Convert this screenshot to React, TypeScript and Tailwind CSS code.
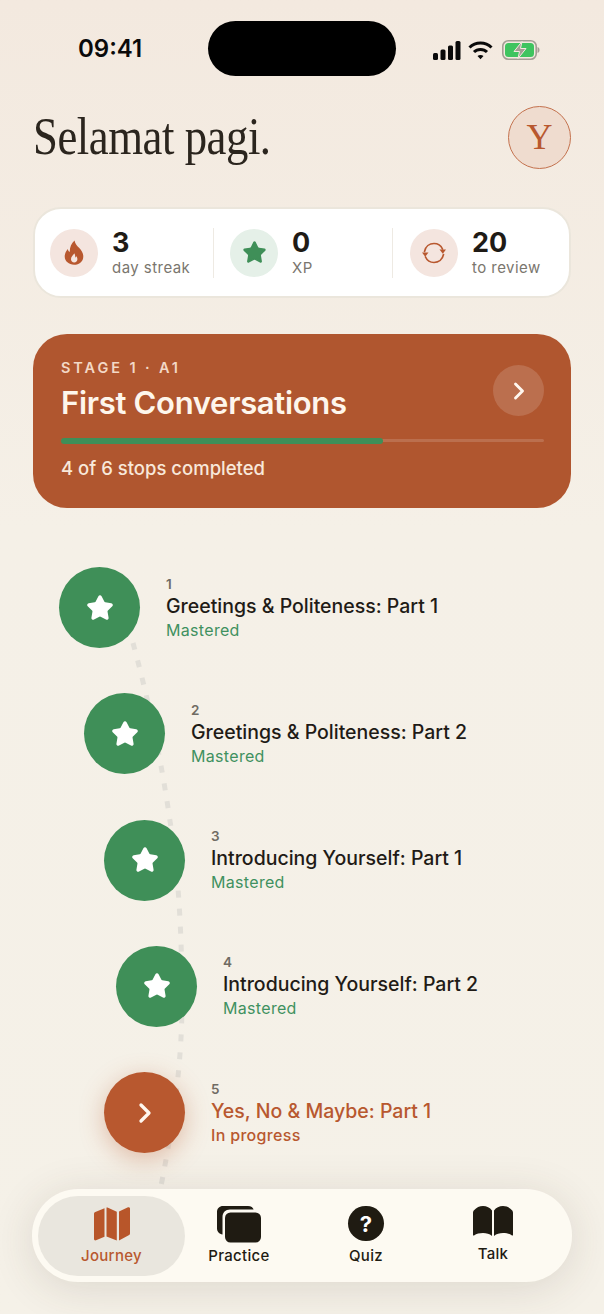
import React from 'react';
import { ChevronRight, Star } from 'lucide-react';

const FlameIcon = () => (
  <svg width="20" height="25" viewBox="0 0 20 25" fill="none">
    <path
      fillRule="evenodd"
      d="M10.5 0.5c0.6 3.6 2.6 5.2 4.8 7.6 2.2 2.4 4 5.100 4 8.300 0 4.900-4 8.400-9.200 8.400S0.700 21.300 0.700 16.600c0-3.300 1.500-5.800 3.100-7.700 0.300 1.500 0.900 2.500 2 3.200C5.500 7.700 7.300 3.300 10.500 0.500z M10.200 13.200c-0.500 1.700-3.200 3.200-3.200 6 0 1.900 1.400 3.300 3.200 3.300s3.200-1.400 3.200-3.300c0-1.200-0.500-2.100-1.200-2.900-0.200 0.700-0.500 1.100-1.100 1.400 0.300-1.500 0-3.200-0.900-4.500z"
      fill="#b8582f"
    />
  </svg>
);

const ReviewIcon = () => (
  <svg width="26" height="24" viewBox="0 0 26 24" fill="none" stroke="#b8582f" strokeWidth="1.7" strokeLinecap="round">
    <path d="M3.500 10.500C4.500 5.500 8.500 2.500 13 2.500c3.700 0 6.900 2 8.500 5.500" />
    <path d="M22.500 13.500c-1 5-5 8-9.500 8-3.700 0-6.900-2-8.500-5.500" />
    <path d="M18.500 8.500h6.500l-3.200 4.200z" fill="#b8582f" stroke="none" />
    <path d="M1 11.500h6.500l-3.300 4.200z" fill="#b8582f" stroke="none" transform="rotate(0)" />
  </svg>
);

const MapIcon = () => (
  <svg width="36" height="34" viewBox="0 0 36 34" fill="#b8562a">
    <path d="M10.500 1.200v28.600L2 33.300c-1 0.400-2-0.200-2-1.300V7c0-0.900 0.500-1.600 1.300-2z" />
    <path d="M12.500 0.600c0.300-0.200 0.700-0.200 1 0L22.800 4.800v28.600L12.500 29.500z" />
    <path d="M25 4.500l9-4.200c1-0.400 2 0.200 2 1.300v24.700c0 0.900-0.500 1.600-1.300 2L25 33.400z" />
  </svg>
);

const PracticeIcon = () => (
  <svg width="44" height="37" viewBox="0 0 44 37">
    <path d="M6 0h25c3 0 5.200 1.600 5.600 3.500H13c-4.500 0-7.500 3-7.500 7.500v17.500C2.300 28 0 25.500 0 22.500V6c0-3.500 2.500-6 6-6z" fill="#1f1b12" />
    <rect x="8" y="6.500" width="36" height="30" rx="5.500" fill="#1f1b12" />
  </svg>
);

const QuizIcon = () => (
  <div className="flex h-[35px] w-[36px] items-center justify-center rounded-full bg-[#1f1b12] text-[22px] leading-none font-bold text-white">
    ?
  </div>
);

const BookIcon = () => (
  <svg width="40" height="32" viewBox="0 0 40 32" fill="#1f1b12">
    <path d="M19 4.500V30c-2.500-2.200-5.500-3-9-3-3.500 0-6.500 0.700-9 2.500-0.500 0.300-1 0-1-0.600V7C0 5.800 0.300 5 1 4.300 3.500 1.500 6.500 0 10 0c3.700 0 7 1.700 9 4.500z" />
    <path d="M21 4.500V30c2.500-2.200 5.500-3 9-3 3.500 0 6.500 0.700 9 2.500 0.500 0.300 1 0 1-0.600V7c0-1.200-0.300-2-1-2.700C36.500 1.500 33.500 0 30 0c-3.700 0-7 1.700-9 4.500z" />
  </svg>
);

const StatusIcons = () => (
  <div className="flex items-center gap-[7px]">
    <svg width="28" height="19" viewBox="0 0 28 19" fill="#0a0a0a">
      <rect x="0" y="12" width="5" height="7" rx="1.500" />
      <rect x="7.500" y="8.500" width="5" height="10.500" rx="1.500" />
      <rect x="15" y="4.500" width="5" height="14.500" rx="1.500" />
      <rect x="22.500" y="0" width="5" height="19" rx="1.500" />
    </svg>
    <svg width="25" height="19" viewBox="0 0 25 19" fill="none" stroke="#0a0a0a" strokeWidth="3">
      <path d="M1.500 6.500C7.500 0.500 17.500 0.500 23.500 6.500" />
      <path d="M6 11c3.500-3.500 9.500-3.500 13 0" />
      <path d="M9.500 15l3 3.200 3-3.200c-1.700-1.500-4.300-1.500-6 0z" fill="#0a0a0a" stroke="none" />
    </svg>
    <svg width="38" height="20" viewBox="0 0 38 20" fill="none" className="ml-[2px]">
      <rect x="0.800" y="0.800" width="33.400" height="18.400" rx="5.500" stroke="#a39e94" strokeWidth="1.600" />
      <rect x="3" y="3" width="29" height="14" rx="3.500" fill="#3fc45f" />
      <path d="M35.500 7v6c1.300-0.400 2-1.500 2-3s-0.700-2.600-2-3z" fill="#a39e94" />
      <path d="M20 1.500L12 11.500h5.500L16 18.500l8-10h-5.500z" fill="#a39e94" stroke="#f3e9df" strokeWidth="1" />
    </svg>
  </div>
);

const StatItem = ({
  icon,
  iconBg,
  value,
  label,
  className,
}: {
  icon: React.ReactNode;
  iconBg: string;
  value: string;
  label: string;
  className: string;
}) => (
  <div className={`flex items-center ${className}`}>
    <div className={`flex h-12 w-12 shrink-0 items-center justify-center rounded-full ${iconBg}`}>{icon}</div>
    <div className="ml-[14px]">
      <div className="text-[27px] leading-[30px] font-bold text-[#1f1b16]">{value}</div>
      <div className="mt-[1px] text-[15px] leading-[18px] tracking-[0.03em] text-[#7a766e]">{label}</div>
    </div>
  </div>
);

const stops = [
  { n: 1, title: 'Greetings & Politeness: Part 1', left: 'ml-[59px]' },
  { n: 2, title: 'Greetings & Politeness: Part 2', left: 'ml-[84px]' },
  { n: 3, title: 'Introducing Yourself: Part 1', left: 'ml-[104px]' },
  { n: 4, title: 'Introducing Yourself: Part 2', left: 'ml-[116px]' },
  { n: 5, title: 'Yes, No & Maybe: Part 1', left: 'ml-[104px]', current: true },
];

const App = () => {
  return (
    <div className="relative h-[1314px] w-[604px] overflow-hidden bg-gradient-to-b from-[#f3e9df] via-[#f5f0e7] via-40% to-[#f5f1e8] font-['Inter',sans-serif]">
      {/* Status bar */}
      <div className="relative flex h-[76px] items-start pt-[21px]">
        <div className="mt-[13px] ml-[78px] text-[24px] leading-[30px] font-semibold text-[#0a0a0a]">09:41</div>
        <div className="absolute top-[21px] left-[208px] h-[55px] w-[188px] rounded-[28px] bg-black" />
        <div className="absolute top-[40px] left-[433px]">
          <StatusIcons />
        </div>
      </div>

      {/* Header */}
      <div className="mt-[29px] flex items-center justify-between pr-[33px] pl-[33px]">
        <h1 className="origin-left scale-x-[0.86] font-['Liberation_Serif',serif] text-[52px] leading-[64px] tracking-[-0.01em] whitespace-nowrap text-[#2b251e]">
          Selamat pagi.
        </h1>
        <div className="flex h-[63px] w-[63px] items-center justify-center rounded-full border border-[#c4724e] bg-[#efdccf] font-['Liberation_Serif',serif] text-[36px] text-[#b8582f]">
          Y
        </div>
      </div>

      {/* Stats */}
      <div className="mx-[33px] mt-[38px] flex h-[91px] items-center rounded-[28px] border-2 border-[#ebe6dc] bg-white">
        <StatItem
          className="w-[178px] pl-[15px]"
          iconBg="bg-[#f4e5df]"
          value="3"
          label="day streak"
          icon={<FlameIcon />}
        />
        <div className="h-[50px] w-px bg-[#eeeae3]" />
        <StatItem
          className="w-[178px] pl-[16px]"
          iconBg="bg-[#e5f0e8]"
          value="0"
          label="XP"
          icon={<Star size={25} fill="#3f8f58" stroke="#3f8f58" strokeWidth={1.500} />}
        />
        <div className="h-[50px] w-px bg-[#eeeae3]" />
        <StatItem
          className="flex-1 pl-[17px]"
          iconBg="bg-[#f4e5df]"
          value="20"
          label="to review"
          icon={<ReviewIcon />}
        />
      </div>

      {/* Stage card */}
      <div className="relative mx-[33px] mt-[36px] h-[174px] rounded-[34px] bg-[#b0562f] px-[28px] pt-[24px]">
        <div className="text-[14.500px] leading-[20px] font-semibold tracking-[0.2em] text-[#f3d8c6]">STAGE 1 · A1</div>
        <div className="mt-[6px] text-[31px] leading-[38px] font-semibold tracking-[-0.01em] text-[#fef6ec]">First Conversations</div>
        <div className="absolute top-[31px] right-[27px] flex h-[51px] w-[51px] items-center justify-center rounded-full bg-white/15">
          <ChevronRight size={28} color="#fff7ef" strokeWidth={2.500} />
        </div>
        <div className="mt-[17px] mr-[-1px] h-[3px] rounded-full bg-white/15">
          <div className="relative top-[-1.500px] h-[6px] w-[322px] rounded-full bg-[#3f8f58]" />
        </div>
        <div className="mt-[13px] text-[18.500px] leading-[26px] font-medium text-[#f8e8da]">4 of 6 stops completed</div>
      </div>

      {/* Journey path */}
      <div className="relative mt-[59px] flex flex-col gap-[45.300px]">
        <svg className="absolute top-[-566px] left-0" width="604" height="1314" fill="none">
          <path
            d="M133 642C146 690 160 750 170 820C180 880 182 950 182 1000C182 1060 174 1120 160 1190"
            stroke="#e2dfd8"
            strokeWidth="5"
            strokeDasharray="7 11"
          />
        </svg>
        {stops.map((stop) => (
          <div key={stop.n} className={`relative flex items-center ${stop.left}`}>
            <div
              className={`flex h-[81px] w-[81px] shrink-0 items-center justify-center rounded-full ${
                stop.current ? 'bg-[#b8582f] shadow-[0_6px_24px_rgba(184,88,47,0.35)]' : 'bg-[#3f8f58]'
              }`}
            >
              {stop.current ? (
                <ChevronRight size={32} color="#fff7ef" strokeWidth={2.500} />
              ) : (
                <Star size={28} fill="#ffffff" stroke="#ffffff" strokeWidth={2} strokeLinejoin="round" />
              )}
            </div>
            <div className="ml-[26px]">
              <div className="text-[13.500px] leading-[18px] font-semibold text-[#6f6b63]">{stop.n}</div>
              <div
                className={`text-[19.500px] leading-[26px] font-medium ${
                  stop.current ? 'text-[#b8582f]' : 'text-[#1f1b16]'
                }`}
              >
                {stop.title}
              </div>
              <div
                className={`mt-[1px] text-[16px] leading-[21px] tracking-[0.02em] ${
                  stop.current ? 'font-medium text-[#b8582f]' : 'text-[#3f9160]'
                }`}
              >
                {stop.current ? 'In progress' : 'Mastered'}
              </div>
            </div>
          </div>
        ))}
      </div>

      {/* Bottom nav */}
      <div className="absolute top-[1189px] left-[32px] flex h-[93px] w-[540px] items-center rounded-[46px] bg-[#fdfaf2] pl-[6px] shadow-[0_6px_44px_rgba(70,60,40,0.14)]">
        <div className="flex h-[80px] w-[147px] flex-col items-center justify-center rounded-[40px] bg-[#e9e6de]">
          <MapIcon />
          <span className="mt-[6px] text-[15px] leading-[18px] font-medium tracking-[0.02em] text-[#b8582f]">Journey</span>
        </div>
        <div className="flex gap-[19px]">
          <div className="flex w-[108px] flex-col items-center">
            <PracticeIcon />
            <span className="mt-[4px] text-[15px] leading-[18px] font-medium tracking-[0.02em] text-[#1f1b12]">Practice</span>
          </div>
          <div className="flex w-[108px] flex-col items-center">
            <QuizIcon />
            <span className="mt-[6px] text-[15px] leading-[18px] font-medium tracking-[0.02em] text-[#1f1b12]">Quiz</span>
          </div>
          <div className="flex w-[108px] flex-col items-center">
            <BookIcon />
            <span className="mt-[7px] text-[15px] leading-[18px] font-medium tracking-[0.02em] text-[#1f1b12]">Talk</span>
          </div>
        </div>
      </div>
    </div>
  );
};

export default App;
